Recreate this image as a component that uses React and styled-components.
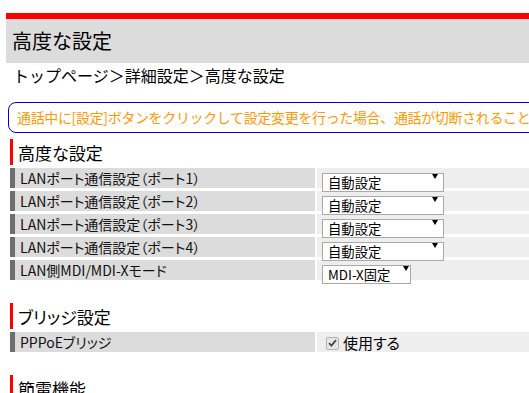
import React from "react";
import styled, { createGlobalStyle } from "styled-components";

const GlobalStyle = createGlobalStyle`
  html, body {
    margin: 0;
    padding: 0;
    overflow: hidden;
    background: #ffffff;
  }
  body {
    font-family: "Noto Sans CJK JP", "Noto Sans", sans-serif;
    color: #000;
  }
`;

const Page = styled.div`
  padding: 13px 0 0 6px;
  width: 523px;
`;

const TopBar = styled.header`
  border-top: 6px solid #ff0000;
  background: #dcdcdc;
  height: 44px;
  display: flex;
  align-items: center;
  padding-left: 6px;
`;

const Title = styled.h1`
  margin: 0;
  font-size: 20px;
  font-weight: normal;
  line-height: 1;
  color: #000;
`;

const Breadcrumb = styled.nav`
  font-size: 16px;
  line-height: 24px;
  padding: 0 0 0 7px;
  color: #000;
`;

const Notice = styled.div`
  margin: 15px 0 0 2px;
  width: max-content;
  white-space: nowrap;
  border: 1px solid #0000cc;
  border-radius: 8px;
  padding: 4px 8px;
  font-size: 14px;
  line-height: 21px;
  letter-spacing: -0.35px;
  color: #ff9900;
`;

const Section = styled.section`
  margin: ${(p) => p.$top}px 0 0 4px;
`;

const Heading = styled.h2`
  margin: 0;
  height: 26px;
  display: flex;
  align-items: center;
  border-left: 3px solid #ff0000;
  padding-left: 5px;
  font-size: 17px;
  font-weight: normal;
  font-feature-settings: "palt";
  color: #000;
`;

const Table = styled.div`
  display: grid;
  grid-template-columns: 305px 1fr;
  column-gap: 2px;
  row-gap: 3px;
  margin-top: 3px;
`;

const LabelCell = styled.div`
  height: 20px;
  box-sizing: border-box;
  background: #dcdcdc;
  border-left: 5px solid #6e6e6e;
  padding-left: 5px;
  display: flex;
  align-items: center;
  font-size: 14px;
  font-feature-settings: "palt";
  color: #111;
`;

const ValueCell = styled.div`
  height: 20px;
  box-sizing: border-box;
  background: #eeeeee;
  padding-left: 5px;
  display: flex;
  align-items: center;
`;

const SelectWrap = styled.div`
  position: relative;
  width: ${(p) => p.$width}px;
  height: 19px;
`;

const Select = styled.select`
  appearance: none;
  -webkit-appearance: none;
  width: 100%;
  height: 100%;
  box-sizing: border-box;
  margin: 0;
  border: 1px solid #a9a9a9;
  border-radius: 0;
  background: #ffffff;
  padding: 0 0 0 5px;
  font-family: "Noto Sans CJK JP", "Noto Sans", sans-serif;
  font-size: 13.33px;
  line-height: 17px;
  color: #000;
  outline: none;
`;

const Arrow = styled.span`
  position: absolute;
  top: 5px;
  right: ${(p) => p.$right}px;
  width: 0;
  height: 0;
  border-left: 3px solid transparent;
  border-right: 3px solid transparent;
  border-top: 5px solid #000;
  pointer-events: none;
`;

const CheckLabel = styled.label`
  display: flex;
  align-items: center;
  gap: 4px;
  padding-left: 4px;
  font-size: 15px;
  font-feature-settings: "palt";
  color: #000;
`;

const CheckBox = styled.span`
  width: 13px;
  height: 13px;
  box-sizing: border-box;
  border: 1px solid #b4b4b4;
  border-radius: 2px;
  background: #e6e6e6;
  display: flex;
  align-items: center;
  justify-content: center;
  margin-top: 2px;
`;

const Dropdown = ({ value, width, arrowRight }) => (
  <SelectWrap $width={width}>
    <Select defaultValue={value}>
      <option>{value}</option>
    </Select>
    <Arrow $right={arrowRight} />
  </SelectWrap>
);

const ports = [1, 2, 3, 4];

export default function App() {
  return (
    <>
      <GlobalStyle />
      <Page>
        <TopBar>
          <Title>高度な設定</Title>
        </TopBar>
        <Breadcrumb>トップページ＞詳細設定＞高度な設定</Breadcrumb>
        <Notice>
          通話中に[設定]ボタンをクリックして設定変更を行った場合、通話が切断されることがあります。
        </Notice>

        <Section $top={6}>
          <Heading>高度な設定</Heading>
          <Table>
            {ports.map((n) => (
              <React.Fragment key={n}>
                <LabelCell>LANポート通信設定（ポート{n}）</LabelCell>
                <ValueCell>
                  <Dropdown value="自動設定" width={122} arrowRight={6} />
                </ValueCell>
              </React.Fragment>
            ))}
            <LabelCell>LAN側MDI/MDI-Xモード</LabelCell>
            <ValueCell>
              <Dropdown value="MDI-X固定" width={89} arrowRight={2} />
            </ValueCell>
          </Table>
        </Section>

        <Section $top={23}>
          <Heading>ブリッジ設定</Heading>
          <Table>
            <LabelCell>PPPoEブリッジ</LabelCell>
            <ValueCell>
              <CheckLabel>
                <CheckBox>
                  <svg width="9" height="8" viewBox="0 0 9 8">
                    <path
                      d="M1 4.2 L3.4 6.6 L8 1.2"
                      fill="none"
                      stroke="#4a4a4a"
                      strokeWidth="1.8"
                    />
                  </svg>
                </CheckBox>
                使用する
              </CheckLabel>
            </ValueCell>
          </Table>
        </Section>

        <Section $top={23}>
          <Heading>節電機能</Heading>
        </Section>
      </Page>
    </>
  );
}
